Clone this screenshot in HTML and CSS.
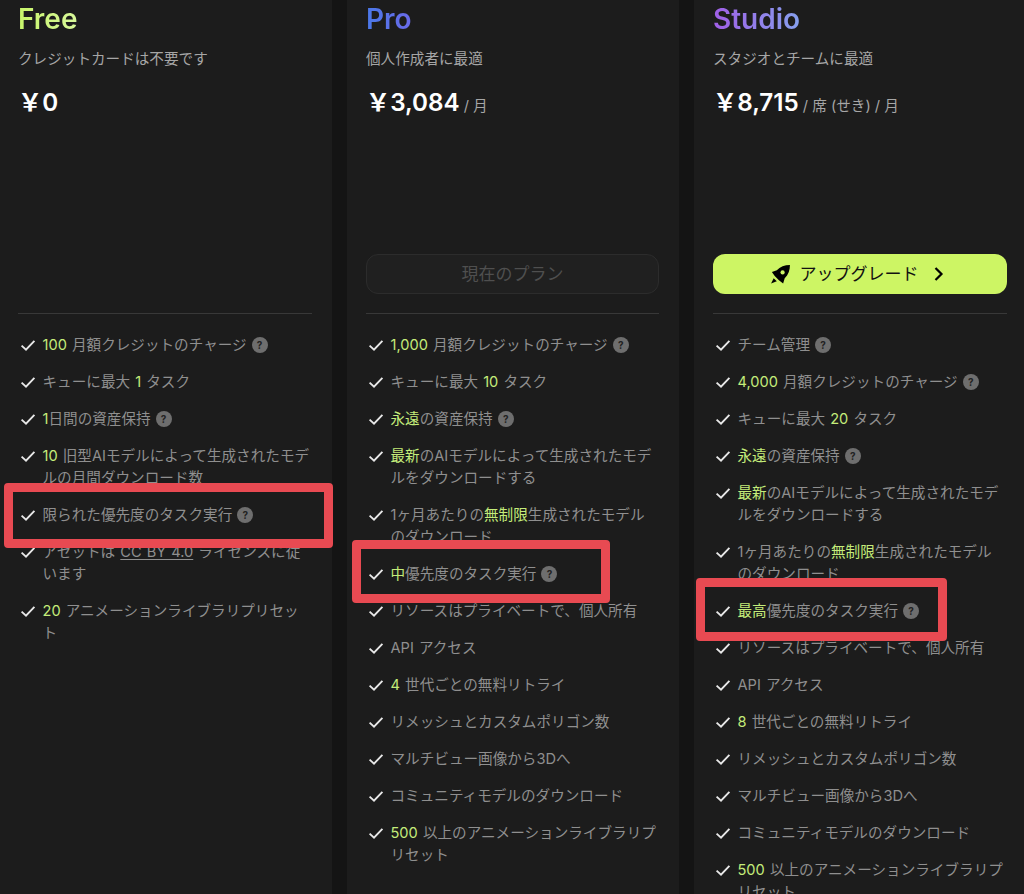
FILE: index.html
```html
<!DOCTYPE html>
<html lang="ja">
<head>
<meta charset="utf-8">
<title>Plans</title>
<link rel="stylesheet" href="styles.css">
</head>
<body>
<svg class="defs" width="0" height="0" aria-hidden="true">
  <symbol id="chk" viewBox="0 0 16 16"><path d="M1.600 8.600 6 12.600 14.400 3.800" fill="none" stroke="#e8e8e8" stroke-width="1.900"/></symbol>
</svg>
<main class="page">
  <section class="card">
    <h2 class="name free">Free</h2>
    <p class="sub">クレジットカードは不要です</p>
    <p class="price"><b>￥0</b></p>
    <div class="action"></div>
    <hr class="rule">
    <ul class="list">
      <li><svg class="check"><use href="#chk"/></svg><span><em>100</em> 月額クレジットのチャージ<i class="q">?</i></span></li>
      <li><svg class="check"><use href="#chk"/></svg><span>キューに最大 <em>1</em> タスク</span></li>
      <li><svg class="check"><use href="#chk"/></svg><span><em>1</em>日間の資産保持<i class="q">?</i></span></li>
      <li><svg class="check"><use href="#chk"/></svg><span><em>10</em> 旧型AIモデルによって生成されたモデルの月間ダウンロード数</span></li>
      <li><svg class="check"><use href="#chk"/></svg><span>限られた優先度のタスク実行<i class="q">?</i></span></li>
      <li><svg class="check"><use href="#chk"/></svg><span>アセットは <u>CC BY 4.0</u> ライセンスに従います</span></li>
      <li><svg class="check"><use href="#chk"/></svg><span><em>20</em> アニメーションライブラリプリセット</span></li>
    </ul>
    <div class="mark mark-free"></div>
  </section>
  <section class="card">
    <h2 class="name pro">Pro</h2>
    <p class="sub">個人作成者に最適</p>
    <p class="price"><b>￥3,084</b><small> / 月</small></p>
    <div class="action"><button class="btn current">現在のプラン</button></div>
    <hr class="rule">
    <ul class="list">
      <li><svg class="check"><use href="#chk"/></svg><span><em>1,000</em> 月額クレジットのチャージ<i class="q">?</i></span></li>
      <li><svg class="check"><use href="#chk"/></svg><span>キューに最大 <em>10</em> タスク</span></li>
      <li><svg class="check"><use href="#chk"/></svg><span><em>永遠</em>の資産保持<i class="q">?</i></span></li>
      <li><svg class="check"><use href="#chk"/></svg><span><em>最新</em>のAIモデルによって生成されたモデルをダウンロードする</span></li>
      <li><svg class="check"><use href="#chk"/></svg><span>1ヶ月あたりの<em>無制限</em>生成されたモデルのダウンロード</span></li>
      <li><svg class="check"><use href="#chk"/></svg><span><em>中</em>優先度のタスク実行<i class="q">?</i></span></li>
      <li><svg class="check"><use href="#chk"/></svg><span>リソースはプライベートで、個人所有</span></li>
      <li><svg class="check"><use href="#chk"/></svg><span>API アクセス</span></li>
      <li><svg class="check"><use href="#chk"/></svg><span><em>4</em> 世代ごとの無料リトライ</span></li>
      <li><svg class="check"><use href="#chk"/></svg><span>リメッシュとカスタムポリゴン数</span></li>
      <li><svg class="check"><use href="#chk"/></svg><span>マルチビュー画像から3Dへ</span></li>
      <li><svg class="check"><use href="#chk"/></svg><span>コミュニティモデルのダウンロード</span></li>
      <li><svg class="check"><use href="#chk"/></svg><span><em>500</em> 以上のアニメーションライブラリプリセット</span></li>
    </ul>
    <div class="mark mark-pro"></div>
  </section>
  <section class="card">
    <h2 class="name studio">Studio</h2>
    <p class="sub">スタジオとチームに最適</p>
    <p class="price"><b>￥8,715</b><small> / 席 (せき) / 月</small></p>
    <div class="action"><button class="btn upgrade">
      <svg class="rocket" viewBox="0 0 20 20"><path d="M19 1C14 1 9.500 2.500 6.500 6L1.800 7.500 4.500 11.500 8.500 15.500 12.500 18.500 14 13.500C17.500 10.500 19 6 19 1Z" fill="#000"/><circle cx="12" cy="8" r="2" fill="#cdf564"/><path d="M1 18.500 3.500 13.500 6.500 16.500Z" fill="#000"/></svg>
      <span>アップグレード</span>
      <svg class="chev" viewBox="0 0 12 16"><path d="M2.500 2 8.500 8 2.500 14" fill="none" stroke="#000" stroke-width="2.200"/></svg>
    </button></div>
    <hr class="rule">
    <ul class="list">
      <li><svg class="check"><use href="#chk"/></svg><span>チーム管理<i class="q">?</i></span></li>
      <li><svg class="check"><use href="#chk"/></svg><span><em>4,000</em> 月額クレジットのチャージ<i class="q">?</i></span></li>
      <li><svg class="check"><use href="#chk"/></svg><span>キューに最大 <em>20</em> タスク</span></li>
      <li><svg class="check"><use href="#chk"/></svg><span><em>永遠</em>の資産保持<i class="q">?</i></span></li>
      <li><svg class="check"><use href="#chk"/></svg><span><em>最新</em>のAIモデルによって生成されたモデルをダウンロードする</span></li>
      <li><svg class="check"><use href="#chk"/></svg><span>1ヶ月あたりの<em>無制限</em>生成されたモデルのダウンロード</span></li>
      <li><svg class="check"><use href="#chk"/></svg><span><em>最高</em>優先度のタスク実行<i class="q">?</i></span></li>
      <li><svg class="check"><use href="#chk"/></svg><span>リソースはプライベートで、個人所有</span></li>
      <li><svg class="check"><use href="#chk"/></svg><span>API アクセス</span></li>
      <li><svg class="check"><use href="#chk"/></svg><span><em>8</em> 世代ごとの無料リトライ</span></li>
      <li><svg class="check"><use href="#chk"/></svg><span>リメッシュとカスタムポリゴン数</span></li>
      <li><svg class="check"><use href="#chk"/></svg><span>マルチビュー画像から3Dへ</span></li>
      <li><svg class="check"><use href="#chk"/></svg><span>コミュニティモデルのダウンロード</span></li>
      <li><svg class="check"><use href="#chk"/></svg><span><em>500</em> 以上のアニメーションライブラリプリセット</span></li>
    </ul>
    <div class="mark mark-studio"></div>
  </section>
</main>
</body>
</html>
```
FILE: styles.css
```css
* { box-sizing: border-box; }
html, body { margin: 0; height: 894px; overflow: hidden; background: #141414; }
body { font-family: Inter, "Noto Sans CJK JP", sans-serif; color: #8f8f8f; }
.defs { position: absolute; }
.page { display: grid; grid-template-columns: 332px 332px 330px; column-gap: 15px; height: 894px; }
.card { position: relative; background: #1c1c1c; padding: 0 20px 0 19px; }
.card:first-child { padding-left: 18px; }
.card:last-child { padding-right: 17px; }
.name { margin: 0; height: 38px; font-size: 28px; line-height: 39px; font-weight: 600; display: inline-block; -webkit-background-clip: text; background-clip: text; color: transparent; }
.free { background-image: linear-gradient(90deg, #c8f56a, #d8f89a); }
.pro { background-image: linear-gradient(90deg, #4a78e8, #6a6ae8); }
.studio { background-image: linear-gradient(90deg, #a05ee6, #86a0ee); }
.sub { margin: 11px 0 0; font-size: 14.600px; line-height: 20px; color: #a6a6a6; }
.price { margin: 19px 0 0; height: 31px; line-height: 30px; color: #a6a6a6; white-space: nowrap; }
.price b { font-size: 24.200px; font-weight: 600; color: #fff; }
.price small { font-size: 14.600px; }
.action { height: 40px; margin-top: 135px; }
.btn { display: flex; align-items: center; justify-content: center; width: 100%; height: 40px; padding: 0 0 3px; border-radius: 12px; font: inherit; font-size: 17px; }
.current { background: #202020; border: 1px solid #2c2c2c; color: #4f4f4f; }
.upgrade { background: #cdf564; border: 0; color: #111; gap: 9px; }
.rocket { width: 21px; height: 21px; margin-top: 3px; }
.chev { width: 12px; height: 16px; margin: 3px 6px 0 5px; }
.rule { margin: 19px 0 20px; border: 0; height: 1px; background: #383838; }
.list { list-style: none; margin: 0 2px 0 0; padding: 0; display: flex; flex-direction: column; gap: 15px; font-size: 14.600px; line-height: 22px; word-spacing: 1px; }
.card:last-child .list { margin-right: 3px; }
.list li { display: flex; gap: 7px; }
.check { flex: none; width: 16px; height: 22px; margin-left: 1.500px; }
.list em { font-style: normal; color: #c4ec7a; }
.list u { text-underline-offset: 2px; }
.q { display: inline-block; width: 16px; height: 16px; margin-left: 5px; border-radius: 50%; background: #6e6e6e; color: #222; font: 700 10px/16px Inter, sans-serif; text-align: center; vertical-align: 1px; }
.mark { position: absolute; border: 9px solid #e84a52; border-radius: 4px; }
.mark-free { left: 4px; top: 483px; width: 329px; height: 65px; }
.mark-pro { left: 5px; top: 540px; width: 258px; height: 63px; }
.mark-studio { left: 2px; top: 578px; width: 251px; height: 63px; }
```
